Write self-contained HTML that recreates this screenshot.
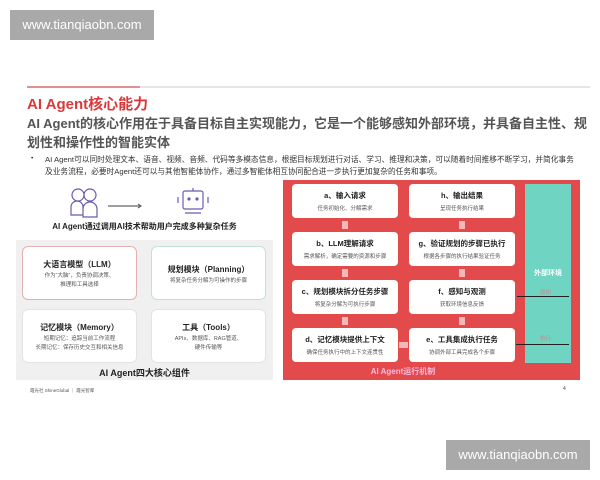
<!DOCTYPE html><html><head><meta charset="utf-8"><style>
body{margin:0;width:600px;height:480px;background:#fff;position:relative;overflow:hidden;font-family:"Liberation Sans","Noto Sans CJK SC",sans-serif}
.a{position:absolute}
.wm{background:#a9a9a9;color:#fff;font-size:13px;text-align:center;line-height:30px;width:144px;height:30px}
.card{background:#fff;border-radius:6px;text-align:center;box-sizing:border-box}
.lc{border:1px solid #e3e3e3}
.card b{display:block;font-size:8px;color:#222;margin-bottom:2px}
.card span{font-size:5.5px;color:#555;line-height:9px;display:block}
.rb{background:#fff;border-radius:4px;width:106px;height:34px;text-align:center;box-sizing:border-box;padding-top:6px}
.rb b{display:block;font-size:7.5px;color:#222}
.rb span{display:block;font-size:5.5px;color:#555;margin-top:3px}
.ar{width:6px;height:8px;background:#f3b8b8}
</style></head><body>
<div class="a wm" style="left:10px;top:10px">www.tianqiaobn.com</div>
<div class="a wm" style="left:446px;top:440px">www.tianqiaobn.com</div>
<div class="a" style="left:27px;top:86px;width:113px;height:2px;background:#e09090"></div>
<div class="a" style="left:140px;top:86px;width:450px;height:2px;background:#e6e6e6"></div>
<div class="a" style="left:27px;top:93px;font-size:15px;font-weight:bold;color:#d9393a">AI Agent核心能力</div>
<div class="a" style="left:27px;top:114px;width:565px;font-size:13px;font-weight:bold;color:#555;line-height:19px">AI Agent的核心作用在于具备目标自主实现能力，它是一个能够感知外部环境，并具备自主性、规划性和操作性的智能实体</div>
<div class="a" style="left:31px;top:155px;font-size:6.5px;color:#333">•</div>
<div class="a" style="left:45px;top:154px;width:545px;font-size:7.7px;color:#333;line-height:12px;white-space:nowrap">AI Agent可以同时处理文本、语音、视频、音频、代码等多模态信息，根据目标规划进行对话、学习、推理和决策，可以随着时间推移不断学习，并简化事务<br>及业务流程，必要时Agent还可以与其他智能体协作，通过多智能体相互协同配合进一步执行更加复杂的任务和事项。</div>
<svg class="a" style="left:70px;top:185px" width="150" height="36" viewBox="0 0 150 36" fill="none" stroke="#6a5ab0" stroke-width="1.2"><circle cx="8" cy="10" r="6"/><circle cx="20" cy="10" r="6"/><path d="M1 30v-8a6 6 0 0 1 12 0v8zM13 32v-8a7 7 0 0 1 14 0v8z"/><path d="M38 21h32" stroke="#666"/><path d="M68 19l3 2-3 2" stroke="#666"/><rect x="113" y="6" width="20" height="18" rx="2"/><path d="M123 6v-3M115 28h16M108 12v6M138 12v6"/><circle cx="119" cy="14" r="1" fill="#6a5ab0"/><circle cx="127" cy="14" r="1" fill="#6a5ab0"/></svg>
<div class="a" style="left:16px;top:221px;width:257px;text-align:center;font-size:8px;font-weight:bold;color:#222">AI Agent通过调用AI技术帮助用户完成多种复杂任务</div>
<div class="a" style="left:16px;top:240px;width:257px;height:140px;background:#f0f0f0"></div>
<div class="a card" style="left:22px;top:246px;width:115px;height:54px;border:1px solid #e4b0b0;padding-top:12px"><b>大语言模型（LLM）</b><span>作为“大脑”，负责协调决策、<br>推理和工具选择</span></div>
<div class="a card" style="left:151px;top:246px;width:115px;height:54px;border:1px solid #bfe3d8;padding-top:17px"><b>规划模块（Planning）</b><span>将复杂任务分解为可操作的步骤</span></div>
<div class="a card lc" style="left:22px;top:309px;width:115px;height:54px;padding-top:12px"><b>记忆模块（Memory）</b><span>短期记忆：追踪当前工作流程<br>长期记忆：保存历史交互和相关信息</span></div>
<div class="a card lc" style="left:151px;top:309px;width:115px;height:54px;padding-top:12px"><b>工具（Tools）</b><span>APIs、数据库、RAG管道、<br>硬件传输等</span></div>
<div class="a" style="left:16px;top:366px;width:257px;text-align:center;font-size:9px;font-weight:bold;color:#222">AI Agent四大核心组件</div>
<div class="a" style="left:30px;top:388px;font-size:4.5px;color:#555">霞光社 ShineGlobal ｜ 霞光智库</div>
<div class="a" style="left:283px;top:180px;width:297px;height:200px;background:#e24a4c"></div>
<div class="a" style="left:525px;top:184px;width:46px;height:179px;background:#6fd4c2"></div>
<div class="a" style="left:525px;top:268px;width:46px;text-align:center;font-size:7px;font-weight:bold;color:#fff">外部环境</div>
<div class="a" style="left:540px;top:288px;font-size:5.5px;color:#c88">感知</div>
<div class="a" style="left:540px;top:334px;font-size:5.5px;color:#c88">执行</div>
<div class="a" style="left:517px;top:296px;width:52px;height:1px;background:#222"></div>
<div class="a" style="left:516px;top:344px;width:53px;height:1px;background:#222"></div>
<div class="a rb" style="left:292px;top:184px"><b>a、输入请求</b><span>任务初始化、分解需求</span></div>
<div class="a rb" style="left:292px;top:232px"><b>b、LLM理解请求</b><span>需求解析，确定需要的资源和步骤</span></div>
<div class="a rb" style="left:292px;top:280px"><b>c、规划模块拆分任务步骤</b><span>将复杂分解为可执行步骤</span></div>
<div class="a rb" style="left:292px;top:328px"><b>d、记忆模块提供上下文</b><span>确保任务执行中的上下文连贯性</span></div>
<div class="a rb" style="left:409px;top:184px"><b>h、输出结果</b><span>呈现任务执行结果</span></div>
<div class="a rb" style="left:409px;top:232px"><b>g、验证规划的步骤已执行</b><span>根据各步骤的执行结果验证任务</span></div>
<div class="a rb" style="left:409px;top:280px"><b>f、感知与观测</b><span>获取环境信息反馈</span></div>
<div class="a rb" style="left:409px;top:328px"><b>e、工具集成执行任务</b><span>协调外部工具完成各个步骤</span></div>
<div class="a ar" style="left:342px;top:221px"></div><div class="a ar" style="left:342px;top:269px"></div><div class="a ar" style="left:342px;top:317px"></div>
<div class="a ar" style="left:459px;top:221px"></div><div class="a ar" style="left:459px;top:269px"></div><div class="a ar" style="left:459px;top:317px"></div>
<div class="a" style="left:399px;top:342px;width:9px;height:6px;background:#f3b8b8"></div>
<div class="a" style="left:283px;top:366px;width:240px;text-align:center;font-size:8px;font-weight:bold;color:#fbd">AI Agent运行机制</div>
<div class="a" style="left:563px;top:386px;font-size:5px;color:#444">4</div>
</body></html>
